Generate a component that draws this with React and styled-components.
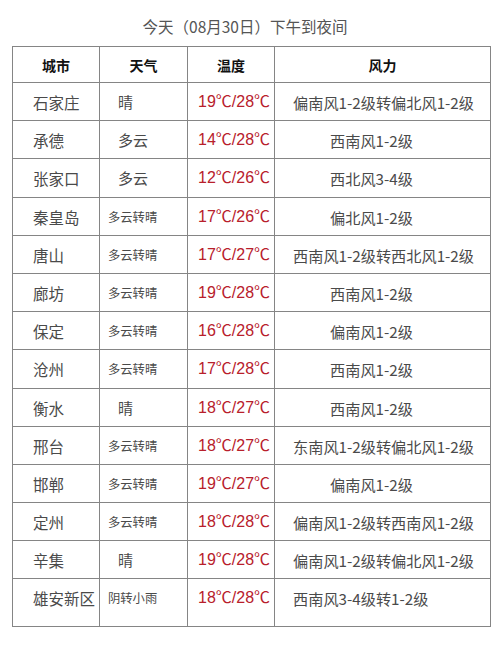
import styled, { createGlobalStyle } from 'styled-components';

const GlobalStyle = createGlobalStyle`
  html, body {
    margin: 0;
    padding: 0;
    background: #ffffff;
  }
  body {
    font-family: "Noto Sans CJK SC", "Liberation Sans", sans-serif;
  }
`;

const Page = styled.div`
  width: 500px;
  height: 646px;
  padding: 0 10px 0 12px;
  box-sizing: border-box;
  overflow: hidden;
`;

const Title = styled.h1`
  margin: 0;
  height: 46px;
  line-height: 52px;
  font-size: 15.5px;
  font-weight: normal;
  color: #555555;
  text-align: center;
  padding-right: 12px;
`;

const Table = styled.table`
  width: 478px;
  border-collapse: collapse;
  table-layout: fixed;
`;

const HeadCell = styled.th`
  height: 35px;
  padding: 0;
  border: 1px solid #858585;
  font-size: 14px;
  font-weight: bold;
  color: #111111;
  text-align: center;
  vertical-align: middle;
`;

const Row = styled.tr`
  height: ${p => (p.$last ? '48px' : '38.2px')};
`;

const Cell = styled.td`
  padding: 7px 0 0 ${p => p.$indent || 0}px;
  border: 1px solid #858585;
  vertical-align: top;
  white-space: nowrap;
  overflow: hidden;
  line-height: 24px;
  font-size: ${p => p.$size || 15}px;
  color: #4a4a4a;
`;

const City = styled(Cell)`
  font-size: 15.5px;
`;

const Temp = styled(Cell)`
  font-family: "Liberation Sans", "Noto Sans CJK SC", sans-serif;
  font-size: 16px;
  color: #b8202b;
`;

const Wind = styled(Cell)`
  font-size: 15.2px;
`;

const rows = [
  ['石家庄', '晴', '19℃/28℃', '偏南风1-2级转偏北风1-2级'],
  ['承德', '多云', '14℃/28℃', '西南风1-2级'],
  ['张家口', '多云', '12℃/26℃', '西北风3-4级'],
  ['秦皇岛', '多云转晴', '17℃/26℃', '偏北风1-2级'],
  ['唐山', '多云转晴', '17℃/27℃', '西南风1-2级转西北风1-2级'],
  ['廊坊', '多云转晴', '19℃/28℃', '西南风1-2级'],
  ['保定', '多云转晴', '16℃/28℃', '偏南风1-2级'],
  ['沧州', '多云转晴', '17℃/28℃', '西南风1-2级'],
  ['衡水', '晴', '18℃/27℃', '西南风1-2级'],
  ['邢台', '多云转晴', '18℃/27℃', '东南风1-2级转偏北风1-2级'],
  ['邯郸', '多云转晴', '19℃/27℃', '偏南风1-2级'],
  ['定州', '多云转晴', '18℃/28℃', '偏南风1-2级转西南风1-2级'],
  ['辛集', '晴', '19℃/28℃', '偏南风1-2级转偏北风1-2级'],
  ['雄安新区', '阴转小雨', '18℃/28℃', '西南风3-4级转1-2级'],
];

const isLongWind = w => w.includes('转');

export default function App() {
  return (
    <>
      <GlobalStyle />
      <Page>
        <Title>今天（08月30日）下午到夜间</Title>
        <Table>
          <colgroup>
            <col style={{ width: 87 }} />
            <col style={{ width: 88 }} />
            <col style={{ width: 87 }} />
            <col style={{ width: 216 }} />
          </colgroup>
          <thead>
            <tr>
              <HeadCell>城市</HeadCell>
              <HeadCell>天气</HeadCell>
              <HeadCell>温度</HeadCell>
              <HeadCell>风力</HeadCell>
            </tr>
          </thead>
          <tbody>
            {rows.map(([city, weather, temp, wind], i) => {
              const last = i === rows.length - 1;
              const small = weather.length > 2;
              return (
                <Row key={city} $last={last}>
                  <City $indent={20}>{city}</City>
                  <Cell $indent={small ? 8 : 18} $size={small ? 12.3 : 15}>
                    {weather}
                  </Cell>
                  <Temp $indent={10}>{temp}</Temp>
                  <Wind $indent={isLongWind(wind) ? 18 : 55}>{wind}</Wind>
                </Row>
              );
            })}
          </tbody>
        </Table>
      </Page>
    </>
  );
}
